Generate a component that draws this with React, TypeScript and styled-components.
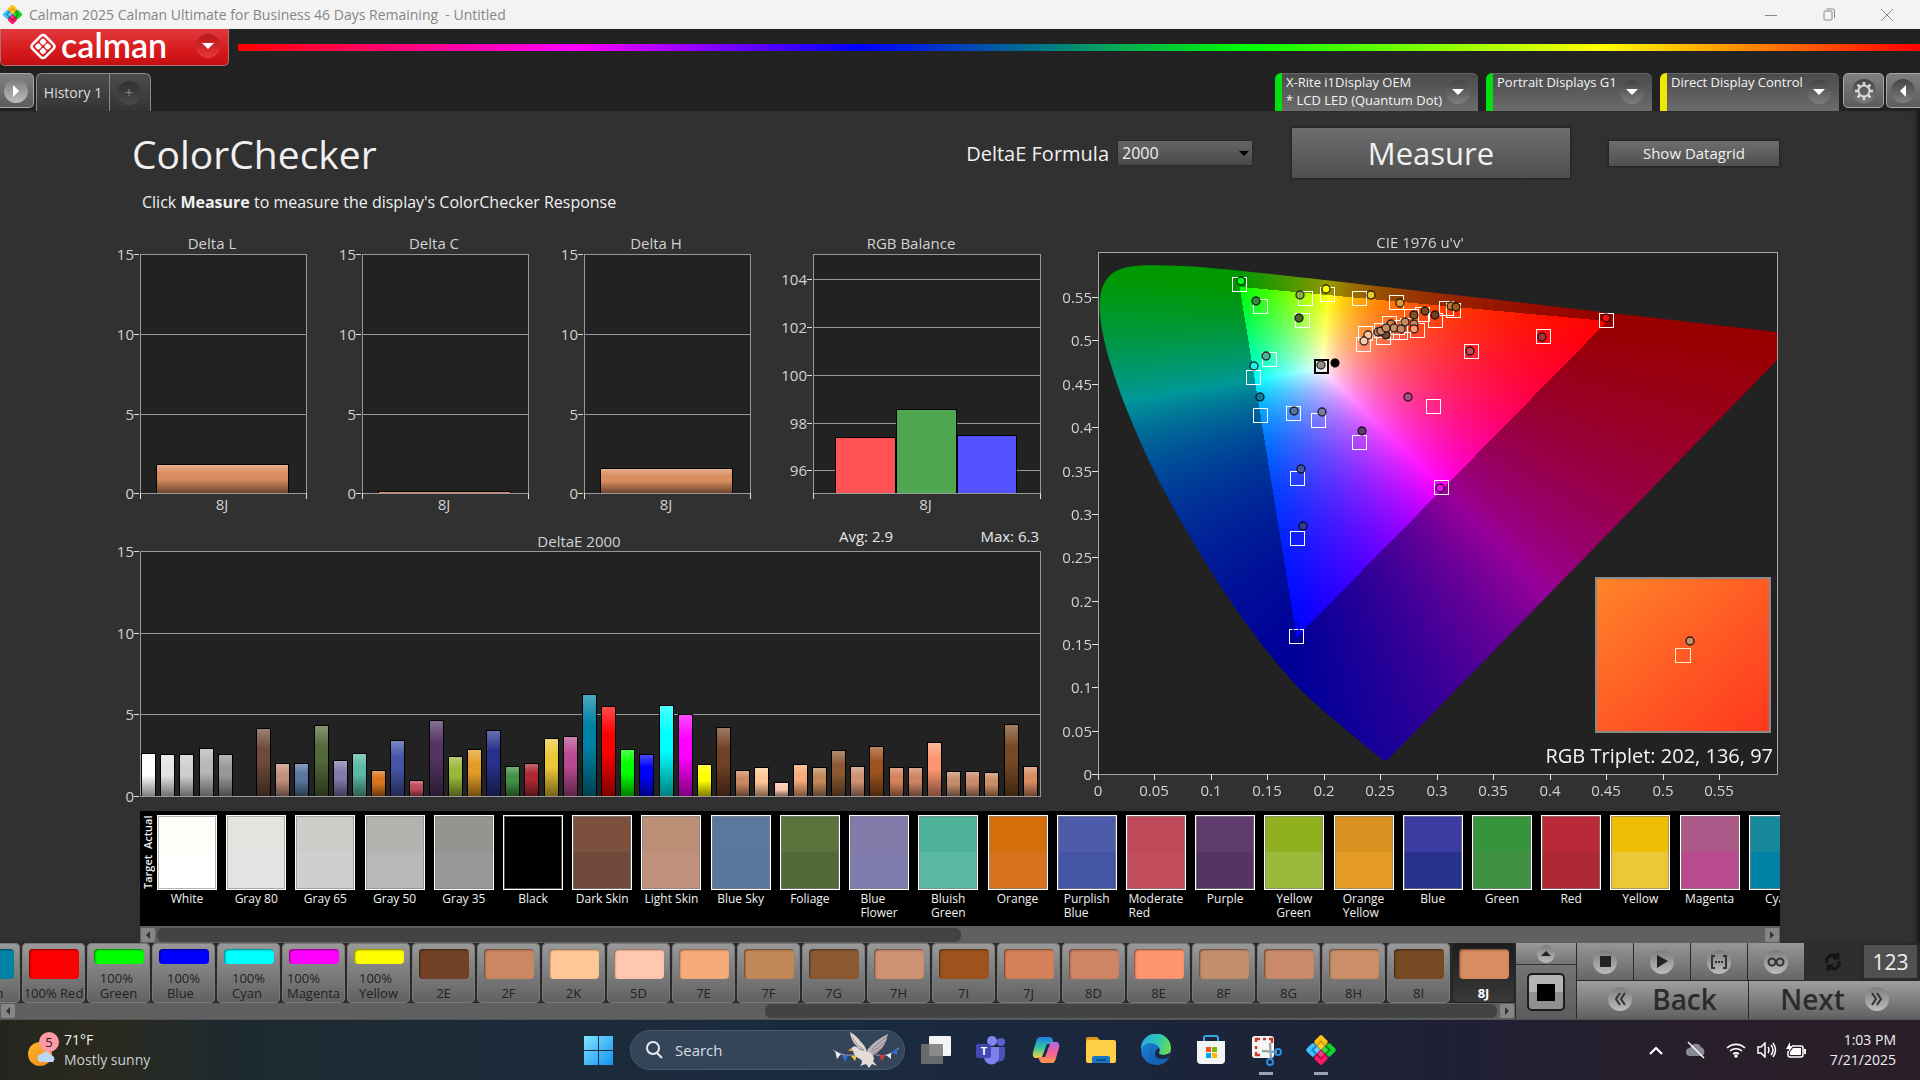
import React, { useEffect, useRef } from 'react';
import styled, { createGlobalStyle, css } from 'styled-components';

const GlobalStyle = createGlobalStyle`
  *, *::before, *::after { box-sizing: border-box; }
  body { margin: 0; background: #222; font-family: "Open Sans", "Noto Sans", sans-serif; color: #f0f0f0; }
  button, select { font: inherit; color: inherit; border: 0; padding: 0; margin: 0; }
  svg { display: block; }
`;

/* ---------- data ---------- */

type Patch = { name: string; lines?: string[]; target: string; actual?: string; delta: number };

const patches: Patch[] = [
  { name: 'White', target: '#ffffff', actual: '#fffffa', delta: 42 },
  { name: 'Gray 80', target: '#e3e3e3', actual: '#e3e3e0', delta: 41 },
  { name: 'Gray 65', target: '#cfcfcf', actual: '#cccdc8', delta: 41 },
  { name: 'Gray 50', target: '#b8b8b8', actual: '#b2b3ae', delta: 47 },
  { name: 'Gray 35', target: '#989898', actual: '#949590', delta: 41 },
  { name: 'Black', target: '#000000', actual: '#000000', delta: 0 },
  { name: 'Dark Skin', target: '#6f4a3b', actual: '#7b513d', delta: 67 },
  { name: 'Light Skin', target: '#c2917e', actual: '#bb8f76', delta: 32 },
  { name: 'Blue Sky', target: '#57779d', actual: '#5a789d', delta: 32 },
  { name: 'Foliage', target: '#526939', actual: '#5a723c', delta: 70 },
  { name: 'Blue Flower', lines: ['Blue', 'Flower'], target: '#817cae', actual: '#837aaa', delta: 35 },
  { name: 'Bluish Green', lines: ['Bluish', 'Green'], target: '#5bb9a6', actual: '#4eb298', delta: 42 },
  { name: 'Orange', target: '#d8731e', actual: '#d66e0a', delta: 25 },
  { name: 'Purplish Blue', lines: ['Purplish', 'Blue'], target: '#4355a4', actual: '#4e5aaa', delta: 55 },
  { name: 'Moderate Red', lines: ['Moderate', 'Red'], target: '#c14d5d', actual: '#c04a5a', delta: 15 },
  { name: 'Purple', target: '#533463', actual: '#603c6e', delta: 75 },
  { name: 'Yellow Green', lines: ['Yellow', 'Green'], target: '#9ab93a', actual: '#90b01f', delta: 39 },
  { name: 'Orange Yellow', lines: ['Orange', 'Yellow'], target: '#e49c26', actual: '#da9220', delta: 46 },
  { name: 'Blue', target: '#28328c', actual: '#3b3da2', delta: 65 },
  { name: 'Green', target: '#419142', actual: '#36943a', delta: 29 },
  { name: 'Red', target: '#ac2832', actual: '#b82a38', delta: 32 },
  { name: 'Yellow', target: '#ecc736', actual: '#efbe04', delta: 57 },
  { name: 'Magenta', target: '#b84a90', actual: '#ac5888', delta: 59 },
  { name: 'Cyan', target: '#0082a4', actual: '#168a9c', delta: 101 },
  { name: '100% Red', target: '#ff0000', delta: 89 },
  { name: '100% Green', lines: ['100%', 'Green'], target: '#00ff00', delta: 46 },
  { name: '100% Blue', lines: ['100%', 'Blue'], target: '#0000ff', delta: 41 },
  { name: '100% Cyan', lines: ['100%', 'Cyan'], target: '#00ffff', delta: 90 },
  { name: '100% Magenta', lines: ['100%', 'Magenta'], target: '#ff00ff', delta: 81 },
  { name: '100% Yellow', lines: ['100%', 'Yellow'], target: '#ffff00', delta: 31 },
  { name: '2E', target: '#734226', delta: 68 },
  { name: '2F', target: '#c98862', delta: 25 },
  { name: '2K', target: '#ffc796', delta: 28 },
  { name: '5D', target: '#ffc8ae', delta: 13 },
  { name: '7E', target: '#f6ab7a', delta: 31 },
  { name: '7F', target: '#c18858', delta: 28 },
  { name: '7G', target: '#8c5a32', delta: 45 },
  { name: '7H', target: '#cc9272', delta: 29 },
  { name: '7I', target: '#9e531e', delta: 49 },
  { name: '7J', target: '#d4825a', delta: 28 },
  { name: '8D', target: '#cd8564', delta: 28 },
  { name: '8E', target: '#fd9670', delta: 53 },
  { name: '8F', target: '#c58e6b', delta: 24 },
  { name: '8G', target: '#c88a6a', delta: 24 },
  { name: '8H', target: '#ca8f66', delta: 23 },
  { name: '8I', target: '#784a24', delta: 71 },
  { name: '8J', target: '#d88c60', delta: 29 },
];

const stripPatches = patches.slice(0, 24);
const tilePatches = patches.slice(23);

/* Marker positions, measured from the plot's top-left corner */
const targets: [number, number][] = [
  [141, 31], [162, 53], [207, 45], [204, 67], [229, 41], [261, 45], [298, 49], [171, 106],
  [155, 124], [162, 162], [195, 160], [220, 167], [261, 189], [199, 225], [335, 153],
  [343, 234], [373, 98], [348, 55], [355, 57], [337, 67], [324, 61], [313, 63], [319, 77],
  [291, 70], [267, 80], [265, 91], [285, 84], [302, 79], [283, 77], [294, 79], [309, 72],
  [299, 74], [199, 285], [198, 383], [508, 67], [445, 83],
];

const readings: [number, number, string][] = [
  [143, 28, '#00ff20'], [158, 48, '#3a8a3c'], [202, 42, '#8fb03a'], [201, 65, '#4a6430'],
  [228, 36, '#ffff00'], [273, 42, '#f0c828'], [302, 50, '#e09a30'], [327, 58, '#7a4a28'],
  [316, 62, '#80502c'], [337, 62, '#704022'], [353, 53, '#c07828'], [358, 54, '#a05a20'],
  [293, 71, '#d08858'], [307, 69, '#c88860'], [316, 71, '#d08060'], [288, 82, '#6e4a38'],
  [280, 79, '#c08868'], [283, 78, '#c98f66'], [296, 75, '#c58e6b'], [288, 75, '#c89060'],
  [303, 76, '#c8886c'], [316, 76, '#ff9870'], [270, 82, '#ffc898'], [266, 88, '#ffc8b0'],
  [168, 103, '#4cb29a'], [156, 113, '#20f0f0'], [162, 144, '#107a98'], [196, 158, '#5a7498'],
  [224, 159, '#8078a8'], [237, 110, '#000000'], [264, 178, '#5a3a68'], [203, 216, '#4858a0'],
  [310, 144, '#a85088'], [342, 235, '#f010f0'], [372, 98, '#c04858'], [205, 273, '#303c90'],
  [508, 65, '#f01010'], [444, 84, '#a83038'],
];

const locus: [number, number][] = [
  [0.1741, 0.005], [0.1714, 0.0051], [0.1644, 0.0109], [0.1566, 0.0177], [0.144, 0.0297],
  [0.1355, 0.0399], [0.1241, 0.0578], [0.1096, 0.0868], [0.0913, 0.1327], [0.0687, 0.2007],
  [0.0454, 0.295], [0.0235, 0.4127], [0.0082, 0.5384], [0.0039, 0.6548], [0.0139, 0.7502],
  [0.0389, 0.812], [0.0743, 0.8338], [0.1142, 0.8262], [0.1547, 0.8059], [0.2296, 0.7543],
  [0.3016, 0.6923], [0.3731, 0.6245], [0.4441, 0.5547], [0.5125, 0.4866], [0.5752, 0.4242],
  [0.627, 0.3725], [0.6658, 0.334], [0.6915, 0.3083], [0.719, 0.2809], [0.7347, 0.2653],
];

/* ---------- title bar ---------- */

const Page = styled.div`
  display: flex;
  flex-direction: column;
  min-height: 100vh;
  background: #222;
`;

const TitleBar = styled.header`
  display: flex;
  align-items: center;
  gap: 6px;
  height: 29px;
  padding: 0 4px 0 2px;
  background: #f3f3f3;
  color: #858585;
  font-size: 14px;
  line-height: 20px;
  white-space: pre;
`;

const WindowButtons = styled.div`
  display: flex;
  margin-left: auto;
`;

const WindowButton = styled.button`
  display: grid;
  place-items: center;
  width: 58px;
  height: 29px;
  background: none;
`;

function CalmanMark({ size }: { size: number }) {
  return (
    <svg width={size} height={size} viewBox="0 0 40 40" aria-hidden="true">
      <g strokeWidth="5" fill="none" strokeLinejoin="round">
        <path d="M20 3 L29 12 L20 21 L11 12Z" fill="#d89c10" stroke="none" />
        <path d="M11 11 L3 20 L11 29 L19 20Z" fill="#1b86c4" stroke="none" />
        <path d="M29 11 L37 20 L29 29 L21 20Z" fill="#0a8a1c" stroke="none" />
        <path d="M20 37 L29 28 L20 19 L11 28Z" fill="#b01048" stroke="none" />
        <path d="M13 11 L20 4 L27 11" stroke="#ffc20e" />
        <path d="M11 13 L4 20 L11 27" stroke="#3fc0ff" />
        <path d="M29 13 L36 20 L29 27" stroke="#13d62c" />
        <path d="M13 29 L20 36 L27 29" stroke="#ff1768" />
      </g>
      <path d="M20 11 L24 15 L20 19 L16 15Z" fill="#ffd23c" />
      <path d="M15 16 L19 20 L15 24 L11 20Z" fill="#5fd0ff" />
      <path d="M25 16 L29 20 L25 24 L21 20Z" fill="#2be040" />
      <path d="M20 21 L24 25 L20 29 L16 25Z" fill="#ff3a80" />
    </svg>
  );
}

/* ---------- application header ---------- */

const BrandRow = styled.div`
  display: flex;
  align-items: center;
  gap: 9px;
  height: 37px;
`;

const BrandButton = styled.button`
  display: flex;
  align-items: center;
  width: 229px;
  height: 37px;
  padding: 0 8px 2px 27px;
  border: 1px solid #b07070;
  border-top: 0;
  border-radius: 0 0 5px 5px;
  background: linear-gradient(#e03a3c, #d8191c 60%, #c41014);
  color: #fff;
`;

const BrandName = styled.span`
  margin: 0 auto 0 3px;
  padding-bottom: 2px;
  font-family: Lato, sans-serif;
  font-size: 34px;
  line-height: 34px;
  font-weight: 600;
`;

const discs = {
  red: 'linear-gradient(#b81418, #e8383a)',
  light: 'linear-gradient(#7c7c7c, #bcbcbc)',
  faint: 'linear-gradient(#303030, #4a4a4a)',
  dark: 'linear-gradient(#444, #7e7e7e)',
};

const Round = styled.span<{ $size?: number; $tone?: keyof typeof discs }>`
  display: inline-grid;
  flex: none;
  place-items: center;
  width: ${p => p.$size ?? 24}px;
  height: ${p => p.$size ?? 24}px;
  border-radius: 50%;
  background: ${p => discs[p.$tone ?? 'dark']};
`;

const Triangle = styled.i<{ $dir: 'up' | 'down' | 'left' | 'right'; $color?: string; $size?: number }>`
  display: block;
  width: 0;
  height: 0;
  border: ${p => p.$size ?? 6}px solid transparent;
  ${p => {
    const c = p.$color ?? '#fff';
    const s = p.$size ?? 6;
    if (p.$dir === 'down') return css`border-top-color: ${c}; border-bottom: 0;`;
    if (p.$dir === 'up') return css`border-bottom-color: ${c}; border-top: 0;`;
    if (p.$dir === 'left') return css`border-right: ${s}px solid ${c}; border-left: 0;`;
    return css`border-left: ${s}px solid ${c}; border-right: 0;`;
  }}
`;

const Rainbow = styled.div`
  flex: 1;
  height: 7px;
  background: linear-gradient(90deg, #f00, #f0f 20%, #00f 37%, #0f0 60%, #ff0 81%, #f00);
`;

const TabRow = styled.nav`
  display: flex;
  align-items: flex-start;
  height: 45px;
  padding-top: 7px;
`;

const EdgeButton = styled.button<{ $width: number; $side?: 'left' | 'right' }>`
  display: grid;
  place-items: center;
  width: ${p => p.$width}px;
  height: 35px;
  border: 1px solid #a8a8a8;
  ${p => p.$side === 'left' && css`border-left: 0; padding-right: 2px;`}
  ${p => p.$side === 'right' && css`border-right: 0; padding-right: 2px;`}
  border-radius: ${p => (p.$side === 'left' ? '0 5px 5px 0' : p.$side === 'right' ? '5px 0 0 5px' : '5px')};
  background: linear-gradient(#808080, #5c5c5c);
`;

const HistoryTabs = styled.div`
  display: flex;
  height: 38px;
  margin-left: 2px;
  border: 1px solid #8a8a8a;
  border-bottom: 0;
  border-radius: 6px 6px 0 0;
  background: linear-gradient(#4c4c4c, #343434);
`;

const HistoryTab = styled.button`
  width: 73px;
  background: none;
  border-right: 1px solid #8a8a8a;
  font-size: 14px;
  color: #dcdcdc;
`;

const AddTab = styled.button`
  display: grid;
  place-items: center;
  width: 40px;
  padding-right: 2px;
  background: none;
  color: #888;
  font-size: 14px;
`;

const Devices = styled.div`
  display: flex;
  margin-left: auto;
  gap: 8px;
`;

const DeviceTab = styled.button<{ $led: string; $width: number }>`
  display: flex;
  justify-content: space-between;
  width: ${p => p.$width}px;
  height: 38px;
  padding-right: 8px;
  border-left: 7px solid ${p => p.$led};
  border-radius: 6px 6px 0 0;
  background: linear-gradient(#4a4a4a, #6c6c6c);
  box-shadow: inset 0 1px 0 #666;
  text-align: left;
  font-size: 13px;
  line-height: 18px;
  white-space: nowrap;
  color: #f4f4f4;
`;

const DeviceText = styled.span`
  padding-left: 4px;
`;

const DeviceArrow = styled(Round)`
  margin-top: 7px;
`;

const HeaderButtons = styled.div`
  display: flex;
  gap: 2px;
  margin-left: 4px;
`;

/* ---------- workspace ---------- */

const Workspace = styled.main`
  flex: 1;
  display: flex;
  flex-direction: column;
  background: #313131;
  box-shadow: inset -6px 0 5px -3px #151515;
`;

const HeadRow = styled.div`
  display: flex;
  align-items: center;
  height: 84px;
  padding: 0 141px 0 132px;
`;

const Title = styled.h1`
  margin: 0 auto 0 0;
  padding-top: 2px;
  font-size: 39px;
  line-height: 50px;
  font-weight: 400;
`;

const FormulaLabel = styled.label`
  margin-right: 8px;
  font-size: 20px;
`;

const SelectBox = styled.div`
  display: grid;
  align-items: center;
  width: 136px;
  margin-right: 39px;

  > * { grid-area: 1 / 1; }
  > i { justify-self: end; margin-right: 4px; pointer-events: none; }
`;

const FormulaSelect = styled.select`
  appearance: none;
  height: 26px;
  padding-left: 4px;
  border: 1px solid #2a2a2a;
  background: linear-gradient(#666, #484848);
  font-size: 16px;
  line-height: 24px;
`;

const ActionButton = styled.button<{ $big?: boolean }>`
  width: ${p => (p.$big ? 278 : 170)}px;
  height: ${p => (p.$big ? 50 : 25)}px;
  margin-right: ${p => (p.$big ? 39 : 0)}px;
  background: linear-gradient(#6e6e6e, #4e4e4e);
  box-shadow: 0 0 2px 1px #222;
  font-size: ${p => (p.$big ? 31 : 15)}px;
  line-height: 1;
`;

const Hint = styled.p`
  margin: 0;
  padding: 0 142px;
  font-size: 16px;
  line-height: 14px;
  height: 37px;
`;

const Charts = styled.div`
  display: grid;
  grid-template-columns: 931fr 720fr;
  gap: 18px;
  padding: 0 140px 0 111px;
`;

const SmallCharts = styled.div`
  display: grid;
  grid-template-columns: 222fr 222fr 222fr 265fr;
`;

const Svg = styled.svg`
  width: 100%;
  height: auto;
  font-size: 15px;
`;

const Overlay = styled.div`
  display: grid;
  > * { grid-area: 1 / 1; }
`;

const Canvas = styled.canvas`
  width: 100%;
  height: auto;
`;

const AxisLabel = styled.text<{ $anchor?: string }>`
  fill: #d2d2d2;
  text-anchor: ${p => p.$anchor ?? 'end'};
`;

const ChartTitle = styled.text`
  fill: #d2d2d2;
  text-anchor: middle;
`;

const BarShade = () => (
  <defs>
    <linearGradient id="shade" x1="0" y1="0" x2="0" y2="1">
      <stop offset="0" stopColor="#fff" stopOpacity="0.3" />
      <stop offset="0.3" stopColor="#fff" stopOpacity="0" />
      <stop offset="0.5" stopColor="#000" stopOpacity="0" />
      <stop offset="1" stopColor="#000" stopOpacity="0.5" />
    </linearGradient>
  </defs>
);

type BarSpec = { x: number; w: number; h: number; color: string; flat?: boolean };

type BarChartProps = {
  width: number;
  height: number;
  title: string;
  titleX: number;
  titleY: number;
  plot: { x: number; y: number; w: number; h: number };
  ticks: { label: string; y: number }[];
  bars: BarSpec[];
  category?: string;
  extra?: React.ReactNode;
};

function BarChart({ width, height, title, titleX, titleY, plot, ticks, bars, category, extra }: BarChartProps) {
  const bottom = plot.y + plot.h;
  return (
    <Svg viewBox={`0 0 ${width} ${height}`} role="img" aria-label={title}>
      <BarShade />
      <ChartTitle x={titleX} y={titleY}>{title}</ChartTitle>
      {extra}
      <rect x={plot.x} y={plot.y} width={plot.w} height={plot.h} fill="#222" />
      <g shapeRendering="crispEdges">
        {ticks.map(t => (
          <React.Fragment key={t.label}>
            <rect x={plot.x} y={t.y} width={plot.w} height="1" fill="#989898" />
            <rect x={plot.x - 6} y={t.y} width="5" height="1" fill="#e0e0e0" />
          </React.Fragment>
        ))}
        <rect x={plot.x} y={plot.y} width={plot.w} height={plot.h} fill="none" stroke="#989898" />
        {bars.map((b, i) =>
          b.h > 0 ? (
            <g key={i}>
              <rect x={b.x - 1} y={bottom - b.h - 1} width={b.w + 2} height={b.h + 1} fill="#000" />
              <rect x={b.x} y={bottom - b.h} width={b.w} height={b.h} fill={b.color} />
              {!b.flat && <rect x={b.x} y={bottom - b.h} width={b.w} height={b.h} fill="url(#shade)" />}
            </g>
          ) : null
        )}
        <rect x={plot.x} y={bottom} width={plot.w} height="1" fill="#9a9a9a" />
        {category && (
          <>
            <rect x={plot.x} y={bottom} width="1" height="6" fill="#e0e0e0" />
            <rect x={plot.x + plot.w} y={bottom} width="1" height="6" fill="#e0e0e0" />
          </>
        )}
      </g>
      {ticks.map(t => (
        <AxisLabel key={t.label} x={plot.x - 6} y={t.y + 6}>{t.label}</AxisLabel>
      ))}
      {category && (
        <AxisLabel $anchor="middle" x={plot.x + plot.w / 2 - 1} y={bottom + 17}>{category}</AxisLabel>
      )}
    </Svg>
  );
}

const smallTicks = [
  { label: '15', y: 22 },
  { label: '10', y: 102 },
  { label: '5', y: 182 },
  { label: '0', y: 261 },
];

function DeltaChart({ title, value }: { title: string; value: number }) {
  return (
    <BarChart
      width={222}
      height={290}
      title={title}
      titleX={101}
      titleY={17}
      plot={{ x: 29, y: 22, w: 166, h: 239 }}
      ticks={smallTicks}
      bars={[{ x: 46, w: 131, h: value, color: '#d98c60' }]}
      category="8J"
    />
  );
}

/* ---------- chromaticity diagram ---------- */

const CIE = { w: 720, h: 574, x: 38, y: 20, pw: 679, ph: 522, perU: 1129, perV: 867 };
const uAxis = ['0', '0.05', '0.1', '0.15', '0.2', '0.25', '0.3', '0.35', '0.4', '0.45', '0.5', '0.55'];

function paintDiagram(canvas: HTMLCanvasElement) {
  const ctx = canvas.getContext('2d');
  if (!ctx) return;
  const { x, y, pw, ph, perU, perV } = CIE;
  const layer = document.createElement('canvas');
  layer.width = pw;
  layer.height = ph;
  const lctx = layer.getContext('2d')!;
  const img = lctx.createImageData(pw, ph);
  for (let j = 0; j < ph; j++) {
    const v = Math.max((ph - j) / perV, 0.001);
    for (let i = 0; i < pw; i++) {
      const u = i / perU;
      const X = (9 * u) / (4 * v);
      const Z = (12 - 3 * u - 20 * v) / (4 * v);
      const r = 3.2406 * X - 1.5372 - 0.4986 * Z;
      const g = -0.9689 * X + 1.8758 + 0.0415 * Z;
      const b = 0.0557 * X - 0.204 + 1.057 * Z;
      const inside = r >= 0 && g >= 0 && b >= 0;
      const scale = (inside ? 255 : 152) / Math.max(r, g, b);
      const o = (j * pw + i) * 4;
      img.data[o] = Math.max(r, 0) * scale;
      img.data[o + 1] = Math.max(g, 0) * scale;
      img.data[o + 2] = Math.max(b, 0) * scale;
      img.data[o + 3] = 255;
    }
  }
  lctx.putImageData(img, 0, 0);

  const pts = locus.map(([cx, cy]) => {
    const d = -2 * cx + 12 * cy + 3;
    return [x + ((4 * cx) / d) * perU, y + ph - ((9 * cy) / d) * perV];
  });
  ctx.fillStyle = '#222';
  ctx.fillRect(x, y, pw, ph);
  ctx.save();
  ctx.beginPath();
  ctx.rect(x, y, pw, ph);
  ctx.clip();
  ctx.beginPath();
  ctx.moveTo(pts[0][0], pts[0][1]);
  for (let k = 0; k < pts.length - 1; k++) {
    const p0 = pts[Math.max(k - 1, 0)];
    const p1 = pts[k];
    const p2 = pts[k + 1];
    const p3 = pts[Math.min(k + 2, pts.length - 1)];
    ctx.bezierCurveTo(
      p1[0] + (p2[0] - p0[0]) / 6, p1[1] + (p2[1] - p0[1]) / 6,
      p2[0] - (p3[0] - p1[0]) / 6, p2[1] - (p3[1] - p1[1]) / 6,
      p2[0], p2[1]
    );
  }
  ctx.closePath();
  ctx.clip();
  ctx.drawImage(layer, x, y);
  ctx.restore();
}

function Chromaticity() {
  const ref = useRef<HTMLCanvasElement>(null);
  useEffect(() => {
    if (ref.current) paintDiagram(ref.current);
  }, []);
  const { w, h, x, y, pw, ph } = CIE;
  return (
    <Overlay>
      <Canvas ref={ref} width={w} height={h} />
      <Svg viewBox={`0 0 ${w} ${h}`} role="img" aria-label="CIE 1976 u'v'">
        <defs>
          <linearGradient id="inset" x1="0" y1="0" x2="1" y2="1">
            <stop offset="0" stopColor="#ff852a" />
            <stop offset="0.5" stopColor="#ff5c24" />
            <stop offset="1" stopColor="#ff381e" />
          </linearGradient>
        </defs>
        <ChartTitle x={360} y={16}>CIE 1976 u&#39;v&#39;</ChartTitle>
        <g shapeRendering="crispEdges">
          <rect x={x} y={y} width={pw} height={ph} fill="none" stroke="#a8a8a8" />
          {uAxis.map((l, i) => (
            <rect key={l} x={x + Math.round(i * 56.45)} y={y + ph} width="1" height="6" fill="#e8e8e8" />
          ))}
          {uAxis.map((l, i) => (
            <rect key={l} x={x - 6} y={y + ph - Math.round(i * 43.35)} width="6" height="1" fill="#e8e8e8" />
          ))}
        </g>
        {uAxis.map((l, i) => (
          <AxisLabel key={l} $anchor="middle" x={x + Math.round(i * 56.45)} y={y + ph + 22}>{l}</AxisLabel>
        ))}
        {uAxis.map((l, i) => (
          <AxisLabel key={l} x={x - 6} y={y + ph - Math.round(i * 43.35) + 6}>{l}</AxisLabel>
        ))}
        <g transform={`translate(${x} ${y + 1})`}>
          <g fill="none" stroke="#fff" shapeRendering="crispEdges">
            {targets.map(([tx, ty], i) => (
              <rect key={i} x={tx - 7} y={ty - 7} width="14" height="14" />
            ))}
            <rect x="217" y="107" width="13" height="13" stroke="#000" strokeWidth="2" />
          </g>
          <circle cx="198" cy="374" r="4" fill="none" stroke="#0000a0" />
          {readings.map(([rx, ry, c], i) => (
            <circle key={i} cx={rx} cy={ry} r="4" fill={c} stroke="#000" strokeOpacity="0.75" strokeWidth="1.4" />
          ))}
          <circle cx="223" cy="112" r="4" fill="#909090" stroke="#333" strokeWidth="1.4" />
        </g>
        <rect x="536" y="346" width="174" height="154" fill="url(#inset)" stroke="#8a8a8a" strokeWidth="2" />
        <rect x="615" y="416" width="15" height="14" fill="none" stroke="#fff0d0" shapeRendering="crispEdges" />
        <circle cx="630" cy="409" r="4" fill="#c89068" stroke="#222" strokeWidth="1.4" />
        <text x="713" y="531" textAnchor="end" fontSize="20" fill="#f4f4f4">RGB Triplet: 202, 136, 97</text>
      </Svg>
    </Overlay>
  );
}

/* ---------- patch strip ---------- */

const Strip = styled.section`
  display: flex;
  height: 115px;
  margin: 5px 140px 0;
  overflow: hidden;
  background: #000;
`;

const StripAxis = styled.div`
  display: flex;
  flex: none;
  justify-content: center;
  gap: 6px;
  width: 17px;
  height: 83px;
  writing-mode: vertical-rl;
  transform: rotate(180deg);
  font-size: 11px;
  line-height: 16px;
  font-weight: 600;
`;

const StripCells = styled.div`
  display: grid;
  flex: none;
  grid-template-columns: repeat(24, 1fr);
  width: 1661px;
`;

const Cell = styled.figure`
  display: flex;
  flex-direction: column;
  align-items: center;
  width: 60px;
  margin: 4px 0 0;
`;

const CellSwatch = styled.div<{ $top: string; $bottom: string }>`
  width: 60px;
  height: 75px;
  border: 1px solid #fff;
  box-shadow: inset 0 0 0 1px rgba(128, 128, 128, 0.6);
  background: linear-gradient(${p => p.$top} 50%, ${p => p.$bottom} 50%);
`;

const CellName = styled.figcaption`
  margin-top: 2px;
  font-size: 12px;
  line-height: 14px;
  white-space: pre;
`;

const ScrollTrack = styled.div<{ $inset?: boolean }>`
  display: flex;
  align-items: center;
  height: ${p => (p.$inset ? 17 : 16)}px;
  margin: ${p => (p.$inset ? '0 140px' : '0')};
  padding: 0 1px;
  background: #606060;
`;

const ScrollThumb = styled.div<{ $size: number }>`
  flex: ${p => p.$size} 0 0;
  height: 14px;
  margin-left: 2px;
  border-radius: 6px;
  background: #434343;
`;

const ScrollRest = styled.div<{ $size: number }>`
  flex: ${p => p.$size} 0 0;
`;

const ScrollButton = styled.button`
  display: grid;
  place-items: center;
  width: 14px;
  height: 14px;
  border-radius: 2px;
  background: #868686;
`;

/* ---------- bottom bar ---------- */

const BottomBar = styled.footer`
  display: flex;
  height: 77px;
  background: #2a2a2a;
  border-bottom: 1px solid #555;
`;

const TilePanel = styled.div`
  flex: 1;
  min-width: 0;
  overflow: hidden;
`;

const Tiles = styled.div`
  display: flex;
  justify-content: flex-end;
  gap: 2px;
  height: 60px;
`;

const Tile = styled.button<{ $active?: boolean }>`
  display: flex;
  flex: none;
  flex-direction: column;
  align-items: center;
  justify-content: space-between;
  width: 63px;
  height: 60px;
  padding: 6px 0 2px;
  border-radius: 5px;
  background: ${p => (p.$active ? 'linear-gradient(#1c1c1c, #3a3a3a)' : 'linear-gradient(#9a9a9a, #606060)')};
  box-shadow: inset 0 0 0 1px ${p => (p.$active ? '#222' : '#7a7a7a')};
  color: ${p => (p.$active ? '#fff' : '#222')};
  font-size: 13px;
  line-height: 15px;
  font-weight: ${p => (p.$active ? 700 : 500)};
  text-align: left;
  white-space: pre;
`;

const TileColor = styled.span<{ $color: string; $short?: boolean }>`
  width: 50px;
  height: ${p => (p.$short ? 15 : 30)}px;
  border-radius: 4px;
  background: ${p => p.$color};
  box-shadow: inset 1px 1px 2px rgba(0, 0, 0, 0.5);
`;

const SidePanel = styled.div`
  display: flex;
  flex-direction: column;
  width: 60px;
  margin: 0 1px;
`;

const UpButton = styled.button`
  display: grid;
  place-items: center;
  height: 22px;
  background: linear-gradient(#9a9a9a, #747474);
  border-bottom: 1px solid #333;
`;

const PatternButton = styled.button`
  display: grid;
  flex: 1;
  place-items: center;
  background: linear-gradient(#747474, #5c5c5c);
`;

const PatternFrame = styled.span`
  display: grid;
  place-items: center;
  width: 38px;
  height: 38px;
  border: 2px solid #1c1c1c;
  border-radius: 5px;
  background: linear-gradient(#b4b4b4 50%, #909090 50%);

  &::after { content: ''; width: 18px; height: 17px; background: #000; }
`;

const Transport = styled.div`
  display: grid;
  grid-template-rows: 37px 39px;
  width: 343px;
`;

const TransportRow = styled.div`
  display: flex;
  gap: 1px;
`;

const TransportButton = styled.button<{ $active?: boolean }>`
  display: grid;
  place-items: center;
  width: 56px;
  background: ${p => (p.$active ? '#2e2e2e' : 'linear-gradient(#969696, #666)')};
`;

const Counter = styled.output`
  display: grid;
  flex: 1;
  place-items: center;
  margin: 2px 3px 2px 2px;
  background: #505050;
  font-size: 21px;
`;

const NavButton = styled.button`
  display: flex;
  flex: 1;
  align-items: center;
  justify-content: center;
  gap: 20px;
  margin-top: 1px;
  padding-bottom: 2px;
  background: linear-gradient(#9e9e9e, #606060);
  color: #2b2b2b;
  font-size: 28px;
  line-height: 30px;
  font-weight: 600;
`;

/* ---------- taskbar ---------- */

const Taskbar = styled.div`
  display: grid;
  grid-template-columns: 1fr auto 1fr;
  align-items: center;
  height: 60px;
  background: linear-gradient(90deg, #23261f, #2b291e 5%, #1e2a30 12%, #1b2b3b 30%, #1a2940 50%, #1c2438 65%, #1f2036 75%, #281f2b 88%, #2a1f28);
  font-size: 14px;
  line-height: 20px;
`;

const Weather = styled.button`
  display: flex;
  align-items: center;
  gap: 5px;
  padding-left: 27px;
  background: none;
  text-align: left;
`;

const Muted = styled.span`
  color: #c9ced2;
`;

const Apps = styled.div`
  display: flex;
  align-items: center;
  gap: 15px;
`;

const AppButton = styled.button<{ $running?: boolean }>`
  display: grid;
  place-items: center;
  width: 40px;
  height: 56px;
  background: none;
  ${p =>
    p.$running &&
    css`
      background: linear-gradient(#9aa3b5, #9aa3b5) center 50px / 14px 3px no-repeat;
    `}
`;

const AppGroup = styled.div`
  display: flex;
  gap: 15px;
  margin-left: -4px;
`;

const SearchBox = styled.button`
  display: flex;
  align-items: center;
  gap: 11px;
  width: 275px;
  height: 40px;
  padding: 0 4px 0 13px;
  border: 1px solid #4a5968;
  border-radius: 20px;
  background: #34455a;
  color: #d8dde2;
  font-size: 15px;
  margin-left: -4px;

  > svg:last-child { margin-left: auto; }
`;

const Tray = styled.div`
  display: flex;
  justify-content: flex-end;
  align-items: center;
  padding-right: 24px;
`;

const TrayButton = styled.button<{ $w: number }>`
  display: grid;
  place-items: center;
  width: ${p => p.$w}px;
  height: 40px;
  background: none;
`;

const Clock = styled.time`
  width: 82px;
  text-align: right;
`;

const ChevronPair = ({ flip }: { flip?: boolean }) => (
  <svg width="12" height="14" viewBox="0 0 12 14" aria-hidden="true">
    <path d={flip ? 'M1 1 L5 7 L1 13 M6 1 L10 7 L6 13' : 'M6 1 L2 7 L6 13 M11 1 L7 7 L11 13'} fill="none" stroke="#333" strokeWidth="2" />
  </svg>
);

function BrandMark() {
  return (
    <svg width="30" height="31" viewBox="0 0 30 30" aria-hidden="true">
      <g transform="rotate(45 15 15)">
        <rect x="6" y="6" width="18" height="18" rx="3" fill="none" stroke="#fff" strokeWidth="2.6" />
        <g fill="#fff">
          <rect x="9" y="9" width="5.4" height="5.4" rx="1.4" />
          <rect x="15.600" y="9" width="5.4" height="5.4" rx="1.4" />
          <rect x="9" y="15.600" width="5.4" height="5.4" rx="1.4" />
          <rect x="15.600" y="15.600" width="5.4" height="5.4" rx="1.4" />
        </g>
      </g>
    </svg>
  );
}

function SettingsGear() {
  return (
    <svg width="20" height="20" viewBox="0 0 20 20" aria-hidden="true">
      <circle cx="10" cy="10" r="5.5" fill="none" stroke="#dadada" strokeWidth="2" />
      {[0, 45, 90, 135, 180, 225, 270, 315].map(a => (
        <rect key={a} x="8.7" y="1" width="2.6" height="3.4" fill="#dadada" transform={`rotate(${a} 10 10)`} />
      ))}
    </svg>
  );
}

function WeatherIcon() {
  return (
    <svg width="32" height="36" viewBox="0 0 32 36" aria-hidden="true">
      <defs>
        <linearGradient id="sun" x1="0" y1="0" x2="1" y2="1">
          <stop offset="0" stopColor="#ffb52a" /><stop offset="1" stopColor="#f08818" />
        </linearGradient>
      </defs>
      <circle cx="13" cy="22" r="12" fill="url(#sun)" />
      <path d="M14 30 a4 4 0 0 1 1 -8 a5 5 0 0 1 9 1 a4 4 0 0 1 2 7z" fill="#bcd6f5" />
      <circle cx="22" cy="10" r="10" fill="#ff99a4" />
      <text x="22" y="15" textAnchor="middle" fontSize="13" fill="#222">5</text>
    </svg>
  );
}

const StartIcon = () => (
  <svg width="30" height="30" viewBox="0 0 30 30" aria-hidden="true">
    <defs>
      <linearGradient id="start" x1="0" y1="0" x2="1" y2="1">
        <stop offset="0" stopColor="#7fe4ff" /><stop offset="1" stopColor="#1392f0" />
      </linearGradient>
    </defs>
    <path d="M0 1h14v14H0z M15 1h14v14H15z M0 16h14v14H0z M15 16h14v14H15z" fill="url(#start)" />
  </svg>
);

const DoveArt = () => (
  <svg width="68" height="36" viewBox="0 0 68 36" aria-hidden="true">
    <path d="M1 18 Q14 27 28 21 M44 23 Q56 26 67 16" fill="none" stroke="#9aa0aa" />
    <path d="M3 19l6 3-4 5z" fill="#e8e8ee" /><path d="M10 23l6 1-3 6z" fill="#2d6fd8" />
    <path d="M19 24l6-1-2 6z" fill="#f0c43c" />
    <path d="M47 23l6 0-3 6z" fill="#d83838" /><path d="M54 23l5-2 0 6z" fill="#e8e8ee" />
    <path d="M60 20l5-4 0 7z" fill="#2d6fd8" />
    <path d="M35 18 Q43 8 56 2 Q54 14 45 21 Q40 25 37 25z" fill="#b9b2b6" />
    <path d="M40 17 Q46 11 55 5 M39 20 Q47 16 53 10 M39 23 Q45 20 50 16" fill="none" stroke="#857d88" />
    <path d="M19 17 q2 -4 6 -2 q4 4 8 4 q6 1 8 5 q2 3 0 5 L45 34 L40 32 L37 36 L34 32 L28 34 Q32 29 28 27 Q22 24 21 19z" fill="#e3dcd6" />
    <path d="M32 19 Q19 13 18 0 Q25 4 28 9 Q33 13 35 20z" fill="#ded6d0" />
    <path d="M20 5 Q24 13 32 18" fill="none" stroke="#968f92" />
    <path d="M19 16l-3 3 5 0z" fill="#e8a040" />
  </svg>
);

const TaskViewIcon = () => (
  <svg width="32" height="30" viewBox="0 0 32 30" aria-hidden="true">
    <rect x="9" y="1" width="22" height="20" rx="1" fill="#f4f4f4" />
    <rect x="1" y="9" width="22" height="20" rx="1" fill="#777" fillOpacity="0.85" />
  </svg>
);

const TeamsIcon = () => (
  <svg width="32" height="30" viewBox="0 0 32 30" aria-hidden="true">
    <circle cx="26" cy="7" r="4" fill="#5b5fd0" />
    <circle cx="17" cy="6" r="5" fill="#8187ee" />
    <path d="M21 12h9v9a6 6 0 0 1-9 5z" fill="#4d50b8" />
    <path d="M9 12h15v10a7 7 0 0 1-15 0z" fill="#7b83eb" />
    <rect x="1" y="9" width="15" height="14" rx="2" fill="#4248b4" />
    <text x="9" y="20" textAnchor="middle" fontSize="11" fontWeight="700" fill="#fff">T</text>
  </svg>
);

const CopilotIcon = () => (
  <svg width="30" height="30" viewBox="0 0 30 30" aria-hidden="true">
    <defs>
      <linearGradient id="cp1" x1="0" y1="0" x2="0" y2="1">
        <stop offset="0" stopColor="#1f7ce8" /><stop offset="0.5" stopColor="#2fc4a0" /><stop offset="1" stopColor="#f4d23a" />
      </linearGradient>
      <linearGradient id="cp2" x1="0" y1="0" x2="0" y2="1">
        <stop offset="0" stopColor="#b56ae8" /><stop offset="0.5" stopColor="#f0609a" /><stop offset="1" stopColor="#ff9a40" />
      </linearGradient>
    </defs>
    <path d="M9 2 H19 Q21 2 22 6 L23 9 H19 Q16 9 15 12 L12 22 Q11 23 8 23 H4 Q1 22 2 17 L5 7 Q6 2 9 2z" fill="url(#cp1)" />
    <path d="M21 28 H12 Q9 28 8 24 L7 22 H11 Q14 21 15 18 L18 9 Q19 7 22 7 H26 Q29 8 28 13 L25 23 Q24 28 21 28z" fill="url(#cp2)" />
    <path d="M16 9 L19 9 L14 22 L11 22z" fill="#1c2a44" />
  </svg>
);

const ExplorerIcon = () => (
  <svg width="32" height="30" viewBox="0 0 32 30" aria-hidden="true">
    <path d="M1 4 q0 -2 2 -2 h9 l4 4 h-15z" fill="#d99a1c" />
    <rect x="1" y="5" width="30" height="23" rx="2" fill="#ffcf48" />
    <path d="M7 28 v-5 q0 -2 2 -2 h14 q2 0 2 2 v5z" fill="#1878c8" />
    <rect x="11" y="24" width="10" height="2" fill="#0d4f92" />
  </svg>
);

const EdgeIcon = () => (
  <svg width="32" height="32" viewBox="0 0 32 32" aria-hidden="true">
    <defs>
      <linearGradient id="ed1" x1="0" y1="0.2" x2="1" y2="0.4">
        <stop offset="0" stopColor="#27a8e8" /><stop offset="0.6" stopColor="#2fc9b0" /><stop offset="1" stopColor="#6bdc50" />
      </linearGradient>
      <linearGradient id="ed2" x1="0" y1="0" x2="1" y2="1">
        <stop offset="0" stopColor="#1c8ae0" /><stop offset="1" stopColor="#0c4fa0" />
      </linearGradient>
    </defs>
    <circle cx="16" cy="16" r="15" fill="url(#ed2)" />
    <path d="M1 15 A15 15 0 0 1 31 14 Q31 21 24 21 Q18 21 19 18 Q21 15 18 12 Q12 7 6 10 Q2 12 1 15z" fill="url(#ed1)" />
    <path d="M13 14 Q10 21 16 25 Q22 29 29 23 Q25 31 17 31 Q8 28 9 20 Q10 16 13 14z" fill="#1464b8" />
    <path d="M18 14 Q21 16 19 18 Q18 21 24 21 L31 19 L29 23 Q21 27 16 23 Q13 19 18 14z" fill="#1c2840" />
  </svg>
);

const StoreIcon = () => (
  <svg width="30" height="30" viewBox="0 0 30 30" aria-hidden="true">
    <path d="M8 7 V3 q0 -2 2 -2 h10 q2 0 2 2 v4" fill="none" stroke="#36a8e8" strokeWidth="2" />
    <path d="M1 6 h28 v19 q0 4 -4 4 h-20 q-4 0 -4 -4z" fill="#f2f4f6" />
    <rect x="10" y="12" width="5" height="5" fill="#f25022" /><rect x="16" y="12" width="5" height="5" fill="#7fba00" />
    <rect x="10" y="18" width="5" height="5" fill="#00a4ef" /><rect x="16" y="18" width="5" height="5" fill="#ffb900" />
  </svg>
);

const SnipIcon = () => (
  <svg width="32" height="32" viewBox="0 0 32 32" aria-hidden="true">
    <rect x="2" y="2" width="22" height="22" rx="3" fill="#f6f6f6" />
    <path d="M6 8v-3h4 M13 5h3 M19 5h3v4 M6 12v3 M6 18v3h4" fill="none" stroke="#c8382c" strokeWidth="2.4" />
    <path d="M12 17 L27 18 M20 9 L21 26" stroke="#9aa2aa" strokeWidth="2.4" />
    <circle cx="28" cy="18" r="3" fill="none" stroke="#2a8fe0" strokeWidth="2" />
    <circle cx="20" cy="28" r="3" fill="none" stroke="#2a8fe0" strokeWidth="2" />
  </svg>
);

/* ---------- composition ---------- */

function Header() {
  return (
    <>
      <TitleBar>
        <CalmanMark size={21} />
        <span>Calman 2025 Calman Ultimate for Business 46 Days Remaining  - Untitled</span>
        <WindowButtons>
          <WindowButton aria-label="Minimize">
            <svg width="12" height="12" viewBox="0 0 12 12"><path d="M0 6.500H12" stroke="#888" /></svg>
          </WindowButton>
          <WindowButton aria-label="Restore">
            <svg width="13" height="13" viewBox="0 0 13 13" fill="none" stroke="#888">
              <rect x="1" y="3" width="8" height="9" rx="1" /><path d="M3.500 1h6q2 0 2 2v7" />
            </svg>
          </WindowButton>
          <WindowButton aria-label="Close">
            <svg width="12" height="12" viewBox="0 0 12 12"><path d="M0 0L12 12M12 0L0 12" stroke="#888" /></svg>
          </WindowButton>
        </WindowButtons>
      </TitleBar>
      <BrandRow>
        <BrandButton>
          <BrandMark />
          <BrandName>calman</BrandName>
          <Round $tone="red"><Triangle $dir="down" /></Round>
        </BrandButton>
        <Rainbow />
      </BrandRow>
      <TabRow>
        <EdgeButton $width={34} $side="left" aria-label="Expand">
          <Round $tone="light"><Triangle $dir="right" /></Round>
        </EdgeButton>
        <HistoryTabs>
          <HistoryTab>History 1</HistoryTab>
          <AddTab aria-label="Add tab"><Round $tone="faint">+</Round></AddTab>
        </HistoryTabs>
        <Devices>
          <DeviceTab $led="#00e010" $width={203}>
            <DeviceText>X-Rite i1Display OEM<br />* LCD LED (Quantum Dot)</DeviceText>
            <DeviceArrow><Triangle $dir="down" /></DeviceArrow>
          </DeviceTab>
          <DeviceTab $led="#00e010" $width={166}>
            <DeviceText>Portrait Displays G1</DeviceText>
            <DeviceArrow><Triangle $dir="down" /></DeviceArrow>
          </DeviceTab>
          <DeviceTab $led="#f0e800" $width={179}>
            <DeviceText>Direct Display Control</DeviceText>
            <DeviceArrow><Triangle $dir="down" /></DeviceArrow>
          </DeviceTab>
        </Devices>
        <HeaderButtons>
          <EdgeButton $width={41} aria-label="Settings"><Round><SettingsGear /></Round></EdgeButton>
          <EdgeButton $width={34} $side="right" aria-label="Collapse"><Round><Triangle $dir="left" /></Round></EdgeButton>
        </HeaderButtons>
      </TabRow>
    </>
  );
}

function DeltaEChart() {
  return (
    <BarChart
      width={931}
      height={284}
      title="DeltaE 2000"
      titleX={468}
      titleY={25}
      plot={{ x: 29, y: 29, w: 900, h: 245 }}
      ticks={[
        { label: '15', y: 29 },
        { label: '10', y: 111 },
        { label: '5', y: 192 },
        { label: '0', y: 274 },
      ]}
      bars={patches.map((p, i) => ({ x: 31 + Math.round(i * 19.17), w: 13, h: p.delta, color: p.target }))}
      extra={
        <>
          <text x="728" y="20" fill="#e8e8e8">Avg: 2.9</text>
          <text x="928" y="20" textAnchor="end" fill="#e8e8e8">Max: 6.3</text>
        </>
      }
    />
  );
}

function BottomControls() {
  return (
    <BottomBar>
      <TilePanel>
        <Tiles>
          {tilePatches.map(p => {
            const active = p.name === '8J';
            return (
              <Tile key={p.name} $active={active}>
                <TileColor $color={p.target} $short={!!p.lines} />
                <span>{p.lines ? p.lines.join('\n') : p.name}</span>
              </Tile>
            );
          })}
        </Tiles>
        <ScrollTrack>
          <ScrollButton aria-label="Scroll left"><Triangle $dir="left" $color="#333" $size={4} /></ScrollButton>
          <ScrollRest $size={750} />
          <ScrollThumb $size={734} />
          <ScrollRest $size={3} />
          <ScrollButton aria-label="Scroll right"><Triangle $dir="right" $color="#333" $size={4} /></ScrollButton>
        </ScrollTrack>
      </TilePanel>
      <SidePanel>
        <UpButton aria-label="Up"><Round $tone="light" $size={18}><Triangle $dir="up" $color="#222" $size={5} /></Round></UpButton>
        <PatternButton aria-label="Pattern window"><PatternFrame /></PatternButton>
      </SidePanel>
      <Transport>
        <TransportRow>
          <TransportButton aria-label="Stop">
            <Round $tone="light"><svg width="11" height="11"><rect width="11" height="11" fill="#222" /></svg></Round>
          </TransportButton>
          <TransportButton aria-label="Play">
            <Round $tone="light"><svg width="12" height="13"><path d="M1 0L12 6L1 13z" fill="#222" /></svg></Round>
          </TransportButton>
          <TransportButton aria-label="Measure series">
            <Round $tone="light">
              <svg width="16" height="14" fill="none" stroke="#333" strokeWidth="2"><path d="M4 1H1V13H4M12 1H15V13H12M4 7H6M7 7H9M10 7H12" /></svg>
            </Round>
          </TransportButton>
          <TransportButton aria-label="Continuous">
            <Round $tone="light">
              <svg width="18" height="10" fill="none" stroke="#333" strokeWidth="2"><circle cx="5" cy="5" r="3.500" /><circle cx="13" cy="5" r="3.500" /></svg>
            </Round>
          </TransportButton>
          <TransportButton $active aria-label="Refresh">
            <svg width="20" height="20" viewBox="0 0 20 20" fill="none" stroke="#151515" strokeWidth="3"><path d="M4 11a6 6 0 0 1 10-6M16 9a6 6 0 0 1-10 6M15 1v5h-5M5 19v-5h5" /></svg>
          </TransportButton>
          <Counter>123</Counter>
        </TransportRow>
        <TransportRow>
          <NavButton><Round $tone="light"><ChevronPair /></Round>Back</NavButton>
          <NavButton>Next<Round $tone="light"><ChevronPair flip /></Round></NavButton>
        </TransportRow>
      </Transport>
    </BottomBar>
  );
}

function DesktopTaskbar() {
  return (
    <Taskbar>
      <Weather>
        <WeatherIcon />
        <span>71°F<br /><Muted>Mostly sunny</Muted></span>
      </Weather>
      <Apps>
        <AppButton aria-label="Start"><StartIcon /></AppButton>
        <SearchBox>
          <svg width="20" height="20" viewBox="0 0 20 20" fill="none" stroke="#e8ecf0" strokeWidth="2" aria-hidden="true">
            <circle cx="9" cy="8" r="6" /><path d="M13 13L18 18" />
          </svg>
          Search
          <DoveArt />
        </SearchBox>
        <AppGroup>
          <AppButton aria-label="Task view"><TaskViewIcon /></AppButton>
          <AppButton aria-label="Teams"><TeamsIcon /></AppButton>
          <AppButton aria-label="Copilot"><CopilotIcon /></AppButton>
          <AppButton aria-label="File Explorer"><ExplorerIcon /></AppButton>
          <AppButton aria-label="Edge"><EdgeIcon /></AppButton>
          <AppButton aria-label="Store"><StoreIcon /></AppButton>
          <AppButton $running aria-label="Snipping Tool"><SnipIcon /></AppButton>
          <AppButton $running aria-label="Calman"><CalmanMark size={32} /></AppButton>
        </AppGroup>
      </Apps>
      <Tray>
        <TrayButton $w={40} aria-label="Hidden icons">
          <svg width="14" height="9" viewBox="0 0 14 9"><path d="M1 8L7 2L13 8" fill="none" stroke="#fff" strokeWidth="2" /></svg>
        </TrayButton>
        <TrayButton $w={40} aria-label="OneDrive">
          <svg width="22" height="18" viewBox="0 0 22 18">
            <path d="M5 15a4 4 0 0 1 0-8a6 6 0 0 1 11-1a5 5 0 0 1 1 9z" fill="#8a8a94" />
            <path d="M3 1L19 17" stroke="#fff" strokeWidth="1.500" />
          </svg>
        </TrayButton>
        <TrayButton $w={40} aria-label="Network">
          <svg width="20" height="16" viewBox="0 0 20 16" fill="none" stroke="#fff" strokeWidth="1.600">
            <path d="M1 6a13 13 0 0 1 18 0M4 9a9 9 0 0 1 12 0M7 12a5 5 0 0 1 6 0" /><circle cx="10" cy="14" r="1" fill="#fff" />
          </svg>
        </TrayButton>
        <TrayButton $w={22} aria-label="Volume">
          <svg width="20" height="16" viewBox="0 0 20 16" fill="none" stroke="#fff" strokeWidth="1.500">
            <path d="M1 5h3l4-4v14l-4-4H1z M11 5q2 3 0 6M14 3q4 5 0 10M16 1q5 7 0 14" />
          </svg>
        </TrayButton>
        <TrayButton $w={36} aria-label="Battery">
          <svg width="20" height="17" viewBox="0 0 20 17">
            <path d="M6 4h9q2 0 2 2v7q0 2-2 2H4q-2 0-2-2V9" fill="none" stroke="#fff" strokeWidth="1.500" />
            <path d="M7 6h8v7H4v-3z" fill="#fff" /><rect x="18" y="7" width="2" height="5" fill="#fff" />
            <path d="M4 0L0 7h3l-1 4 5-7H4z" fill="#fff" />
          </svg>
        </TrayButton>
        <Clock>1:03 PM<br />7/21/2025</Clock>
      </Tray>
    </Taskbar>
  );
}

export default function App() {
  return (
    <Page>
      <GlobalStyle />
      <Header />
      <Workspace>
        <HeadRow>
          <Title>ColorChecker</Title>
          <FormulaLabel htmlFor="formula">DeltaE Formula</FormulaLabel>
          <SelectBox>
            <FormulaSelect id="formula" defaultValue="2000">
              <option>2000</option>
              <option>1994</option>
              <option>1976</option>
            </FormulaSelect>
            <Triangle $dir="down" $color="#000" $size={5} />
          </SelectBox>
          <ActionButton $big>Measure</ActionButton>
          <ActionButton>Show Datagrid</ActionButton>
        </HeadRow>
        <Hint>Click <b>Measure</b> to measure the display&#39;s ColorChecker Response</Hint>
        <Charts>
          <div>
            <SmallCharts>
              <DeltaChart title="Delta L" value={28} />
              <DeltaChart title="Delta C" value={1} />
              <DeltaChart title="Delta H" value={24} />
              <BarChart
                width={265}
                height={290}
                title="RGB Balance"
                titleX={134}
                titleY={17}
                plot={{ x: 36, y: 22, w: 227, h: 239 }}
                ticks={[
                  { label: '104', y: 47 },
                  { label: '102', y: 95 },
                  { label: '100', y: 143 },
                  { label: '98', y: 191 },
                  { label: '96', y: 238 },
                ]}
                bars={[
                  { x: 59, w: 59, h: 55, color: '#ff5353', flat: true },
                  { x: 120, w: 59, h: 83, color: '#4fa84f', flat: true },
                  { x: 181, w: 58, h: 57, color: '#5353ff', flat: true },
                ]}
                category="8J"
              />
            </SmallCharts>
            <DeltaEChart />
          </div>
          <Chromaticity />
        </Charts>
        <Strip>
          <StripAxis><span>Target</span><span>Actual</span></StripAxis>
          <StripCells>
            {stripPatches.map(p => (
              <Cell key={p.name}>
                <CellSwatch $top={p.actual ?? p.target} $bottom={p.target} />
                <CellName>{p.lines ? p.lines.join('\n') : p.name}</CellName>
              </Cell>
            ))}
          </StripCells>
        </Strip>
        <ScrollTrack $inset>
          <ScrollButton aria-label="Scroll left"><Triangle $dir="left" $color="#333" $size={4} /></ScrollButton>
          <ScrollThumb $size={804} />
          <ScrollRest $size={804} />
          <ScrollButton aria-label="Scroll right"><Triangle $dir="right" $color="#333" $size={4} /></ScrollButton>
        </ScrollTrack>
      </Workspace>
      <BottomControls />
      <DesktopTaskbar />
    </Page>
  );
}
